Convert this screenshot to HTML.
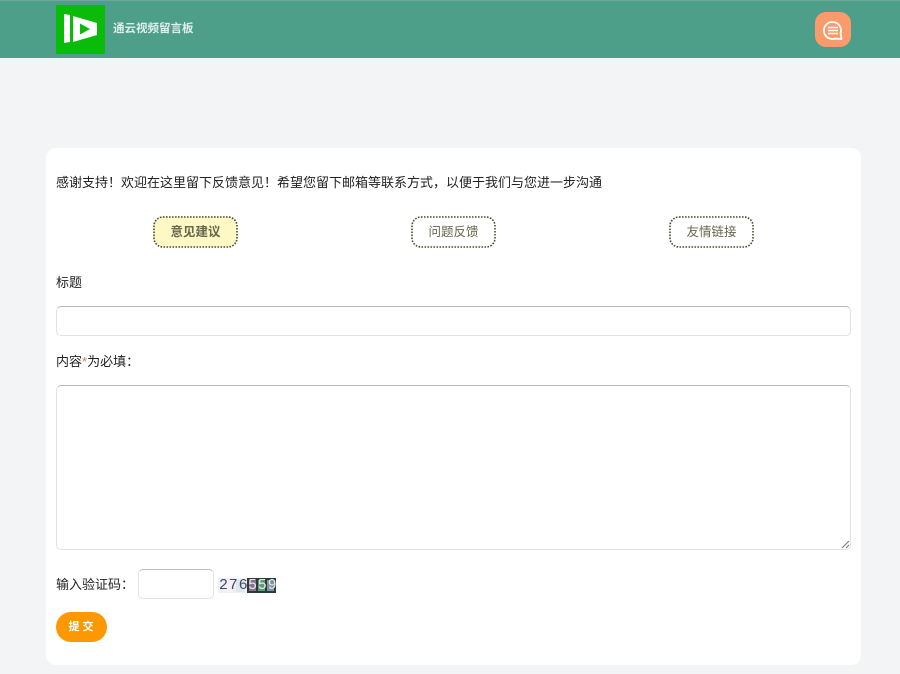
<!DOCTYPE html>
<html lang="zh-CN">
<head>
<meta charset="utf-8">
<title>通云视频留言板</title>
<style>
*{box-sizing:border-box;margin:0;padding:0}
html,body{width:900px;height:674px;overflow:hidden;background:#f3f4f6;font-family:"Liberation Sans","Noto Sans CJK SC",sans-serif;color:#222}
.abs{position:absolute}
.t{position:absolute;font-size:13px;line-height:20px;white-space:nowrap;color:#222}
#hd{left:0;top:0;width:900px;height:58px;background:#4d9f8a;border-top:1px solid #6fa89b}
#card{left:46px;top:148px;width:815px;height:517px;background:#fff;border-radius:10px}
.tab{position:absolute;top:216px;width:85px;height:32px;font-size:12.5px;line-height:32px;text-align:center;color:#66664d}
.tab svg{position:absolute;left:0;top:0}
.tab span{position:relative}
.box{position:absolute;left:56px;width:795px;background:#fff;border:1px solid #e2e2e2;border-top-color:#b8b8b8;border-radius:5px}
</style>
</head>
<body>
<div id="hd" class="abs"></div>
<svg class="abs" style="left:56px;top:5px" width="49" height="49" viewBox="0 0 49 49">
  <rect width="49" height="49" fill="#0abb0a"/>
  <path d="M8 9 L14 10 V37 L8 38 Z" fill="#fff"/>
  <path d="M17 11 L41 18 V30 L17 37 Z" fill="#fff"/>
  <path d="M24 18.500 L34 24 L24 29.500 Z" fill="#0abb0a"/>
</svg>
<div class="t" style="left:113px;top:19px;font-size:11.5px;font-weight:bold;color:#dfeee9">通云视频留言板</div>

<div class="abs" style="left:815px;top:12px;width:36px;height:35px;background:#fb9a6a;border-radius:11px"></div>
<svg class="abs" style="left:815px;top:12px" width="36" height="35" viewBox="0 0 36 35">
  <path d="M17.500 10 A8.500 8.500 0 1 0 20 26.600 L26.500 27 L25.600 21 A8.500 8.500 0 0 0 17.500 10 Z" fill="none" stroke="#fff" stroke-width="1.800" stroke-linejoin="round"/>
  <path d="M13 15.500 H23 M13 18.500 H23 M13 21.500 H23" stroke="#fff" stroke-width="1.500"/>
</svg>

<div id="card" class="abs"></div>

<div class="t" style="left:56px;top:173px">感谢支持！欢迎在这里留下反馈意见！希望您留下邮箱等联系方式，以便于我们与您进一步沟通</div>

<div class="tab" style="left:153px;font-weight:bold"><svg width="85" height="32"><rect x="1" y="1" width="83" height="30" rx="9" fill="#fdf8c4" stroke="#4a4a32" stroke-width="1.600" stroke-dasharray="1.600 1.400"/></svg><span>意见建议</span></div>
<div class="tab" style="left:411px"><svg width="85" height="32"><rect x="1" y="1" width="83" height="30" rx="9" fill="#fff" stroke="#4a4a32" stroke-width="1.600" stroke-dasharray="1.600 1.400"/></svg><span>问题反馈</span></div>
<div class="tab" style="left:669px"><svg width="85" height="32"><rect x="1" y="1" width="83" height="30" rx="9" fill="#fff" stroke="#4a4a32" stroke-width="1.600" stroke-dasharray="1.600 1.400"/></svg><span>友情链接</span></div>

<div class="t" style="left:56px;top:273px">标题</div>
<div class="box" style="top:306px;height:30px"></div>

<div class="t" style="left:56px;top:352px">内容<span style="color:#e8704a">*</span>为必填：</div>
<div class="box" style="top:385px;height:165px"></div>
<svg class="abs" style="left:841px;top:540px" width="9" height="9" viewBox="0 0 9 9">
  <path d="M1 8 L8 1 M5 8 L8 5" stroke="#777" stroke-width="1"/>
</svg>

<div class="t" style="left:56px;top:575px">输入验证码：</div>
<div class="abs" style="left:138px;top:569px;width:76px;height:30px;background:#fff;border:1px solid #e4e4e4;border-top-color:#bcbcbc;border-radius:5px"></div>

<svg class="abs" style="left:218px;top:577px" width="58" height="16" viewBox="0 0 58 16">
  <rect x="0" y="1" width="29" height="15" fill="#eef0f6"/>
  <rect x="7" y="2" width="8" height="13" fill="#f6f2f4"/>
  <rect x="18" y="3" width="8" height="12" fill="#dfe6ee"/>
  <rect x="29" y="1" width="29" height="15" fill="#2e3a3a"/>
  <rect x="31" y="3" width="7" height="11" fill="#8a6f95"/>
  <rect x="40" y="3" width="7" height="11" fill="#5f9a78"/>
  <rect x="49" y="3" width="7" height="11" fill="#7f93a8"/>
</svg>
<div class="t" style="left:219px;top:576px;font-size:15px;line-height:19px;letter-spacing:.8px;color:#3c4a66;font-family:'Liberation Mono',monospace;width:28px;overflow:hidden">276</div>
<div class="t" style="left:248px;top:576px;font-size:15px;line-height:19px;letter-spacing:.8px;color:#e4ecdf;font-family:'Liberation Mono',monospace;width:28px;overflow:hidden">559</div>

<div class="abs" style="left:56px;top:612px;width:51px;height:30px;background:#ff9800;border-radius:15px;color:#fff;font-size:11px;font-weight:bold;line-height:30px;text-align:center;letter-spacing:3px;padding-left:2px">提交</div>
</body>
</html>
